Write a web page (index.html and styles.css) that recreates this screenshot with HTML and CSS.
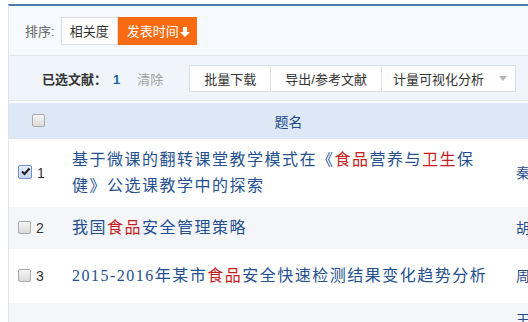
FILE: index.html
```html
<!DOCTYPE html>
<html lang="zh-CN">
  <head>
    <meta charset="UTF-8" />
    <meta name="viewport" content="width=device-width, initial-scale=1.0" />
    <title>检索结果</title>
    <link rel="stylesheet" href="styles.css">
  </head>
  <body>
    <div class="panel">
      <div class="sort-bar">
        <span class="sort-label">排序:</span>
        <div class="sort-group">
          <a class="sort-btn">相关度</a>
          <a class="sort-btn active">发表时间<svg class="sort-arrow" width="12" height="12" viewBox="0 0 12 12"><path d="M4 1h4v5h3l-5 5-5-5h3z" fill="#fff"/></svg></a>
        </div>
      </div>

      <div class="tool-bar">
        <span class="selected">已选文献：<em>1</em></span>
        <a class="clear">清除</a>
        <div class="tool-group">
          <a class="tool-btn">批量下载</a>
          <a class="tool-btn">导出/参考文献</a>
          <a class="tool-btn drop">计量可视化分析<svg class="drop-arrow" width="8" height="5" viewBox="0 0 8 5"><path d="M0 0h8L4 5z" fill="#b4b4b4"/></svg></a>
        </div>
      </div>

      <table class="result-table">
        <colgroup>
          <col class="c-check">
          <col class="c-title">
          <col class="c-author">
          <col class="c-source">
          <col class="c-date">
          <col class="c-db">
        </colgroup>
        <thead>
          <tr>
            <th class="check-head"><span class="cb"></span></th>
            <th>题名</th>
            <th>作者</th>
            <th>来源</th>
            <th>发表时间</th>
            <th>数据库</th>
          </tr>
        </thead>
        <tbody>
          <tr>
            <td class="seq"><span class="cb checked"><svg width="11" height="11" viewBox="0 0 11 11"><path d="M2 5.5l2.5 2.5L9.5 2.5" fill="none" stroke="#1c1c1c" stroke-width="2"/></svg></span>1</td>
            <td class="title"><a>基于微课的翻转课堂教学模式在《<em>食品</em>营养与<em>卫生</em>保健》公选课教学中的探索</a></td>
            <td class="author">秦丽</td>
            <td class="source">教育教学论坛</td>
            <td class="date">2018-01-10</td>
            <td>期刊</td>
          </tr>
          <tr>
            <td class="seq"><span class="cb"></span>2</td>
            <td class="title"><a>我国<em>食品</em>安全管理策略</a></td>
            <td class="author">胡颖</td>
            <td class="source">现代食品</td>
            <td class="date">2018-01-08</td>
            <td>期刊</td>
          </tr>
          <tr>
            <td class="seq"><span class="cb"></span>3</td>
            <td class="title"><a>2015-2016年某市<em>食品</em>安全快速检测结果变化趋势分析</a></td>
            <td class="author">周磊</td>
            <td class="source">中国卫生检验杂志与食品卫生</td>
            <td class="date">2017-12-30</td>
            <td>期刊</td>
          </tr>
          <tr>
            <td class="seq"><span class="cb"></span>4</td>
            <td class="title"><a><em>食品</em>安全风险监测工作现状与对策</a></td>
            <td class="author">王亚楠;刘振宇;张晓明</td>
            <td class="source">食品安全质量检测学报</td>
            <td class="date">2017-12-25</td>
            <td>期刊</td>
          </tr>
        </tbody>
      </table>
    </div>
  </body>
</html>
```

FILE: styles.css
```css
html,
body {
  overflow: hidden;
}
body {
  margin: 4px 0 0 8px;
  background-color: #fff;
  font-family: 'Liberation Sans', 'Noto Sans CJK SC', sans-serif;
  font-size: 13px;
  color: #333;
}
a {
  cursor: pointer;
}
.panel {
  border-top: 2px solid #4a7db4;
  border-left: 1px solid #dde4ee;
  width: 900px;
}
.sort-bar {
  display: flex;
  align-items: center;
  gap: 6px;
  height: 49px;
  padding-left: 16px;
  background-color: #f6f9fd;
  border-bottom: 1px solid #e1e7ef;
}
.sort-label {
  color: #666;
}
.sort-group {
  display: flex;
}
.sort-btn {
  display: flex;
  align-items: center;
  height: 26px;
  padding: 0 8px;
  border: 1px solid #dcdcdc;
  background-color: #fff;
  color: #333;
}
.sort-btn.active {
  padding: 0 5px 0 8px;
  border-color: #f86b12;
  background-color: #f86b12;
  color: #fff;
}
.sort-arrow {
  margin-top: 3px;
}
.tool-bar {
  display: flex;
  align-items: center;
  height: 44px;
  padding-left: 33px;
  background-color: #f0f5fc;
  border-bottom: 1px solid #e1e7ef;
}
.selected {
  font-weight: bold;
  color: #333;
}
.selected em {
  font-style: normal;
  color: #2060a8;
  margin-left: 6px;
}
.clear {
  margin-left: 17px;
  color: #a0a0a0;
}
.tool-group {
  display: flex;
  margin-left: 26px;
  background-color: #fff;
  border: 1px solid #dcdfe4;
}
.tool-btn {
  display: flex;
  align-items: center;
  height: 25px;
  padding: 0 14px;
  border-left: 1px solid #dcdfe4;
  color: #333;
}
.tool-btn:first-child {
  border-left: none;
}
.tool-btn.drop {
  padding: 0 8px 0 11px;
}
.drop-arrow {
  margin-left: 15px;
}
.result-table {
  width: 900px;
  margin-top: 2px;
  border-collapse: collapse;
  table-layout: fixed;
}
.c-check {
  width: 58px;
}
.c-title {
  width: 443px;
}
.c-author {
  width: 80px;
}
.c-source {
  width: 130px;
}
.c-date {
  width: 100px;
}
.result-table th {
  height: 36px;
  padding: 0;
  background-color: #dde8f7;
  font-weight: normal;
  font-size: 14px;
  color: #1d4b88;
  text-align: center;
}
.result-table td {
  padding: 8px 5px;
  vertical-align: middle;
  line-height: 19px;
}
.result-table tbody tr:nth-child(even) td {
  background-color: #f4f6fa;
}
.seq {
  padding-left: 9px !important;
  font-size: 14px;
  color: #333;
}
.cb {
  display: inline-block;
  width: 11px;
  height: 11px;
  border: 1px solid #a9a9a9;
  border-radius: 2px;
  background: linear-gradient(#f6f6f6, #dadada);
  vertical-align: -1px;
  margin-right: 5px;
}
.check-head .cb {
  margin: 0;
}
.cb.checked {
  width: 12px;
  height: 12px;
  border-color: #7190cc;
  background: linear-gradient(#e6edf9, #c3d3ee);
}
.cb svg {
  display: block;
  margin: 0.5px;
}
.title {
  padding-right: 14px !important;
}
.title a {
  font-family: 'Liberation Serif', 'Noto Sans CJK SC', serif;
  font-size: 16px;
  letter-spacing: 1.5px;
  line-height: 26px;
  color: #24508f;
}
.title em {
  font-style: normal;
  color: #c41e1e;
}
.author {
  font-size: 14px;
  color: #1f4c8c;
  padding-left: 6px !important;
}
.source {
  color: #1f4c8c;
}
```
